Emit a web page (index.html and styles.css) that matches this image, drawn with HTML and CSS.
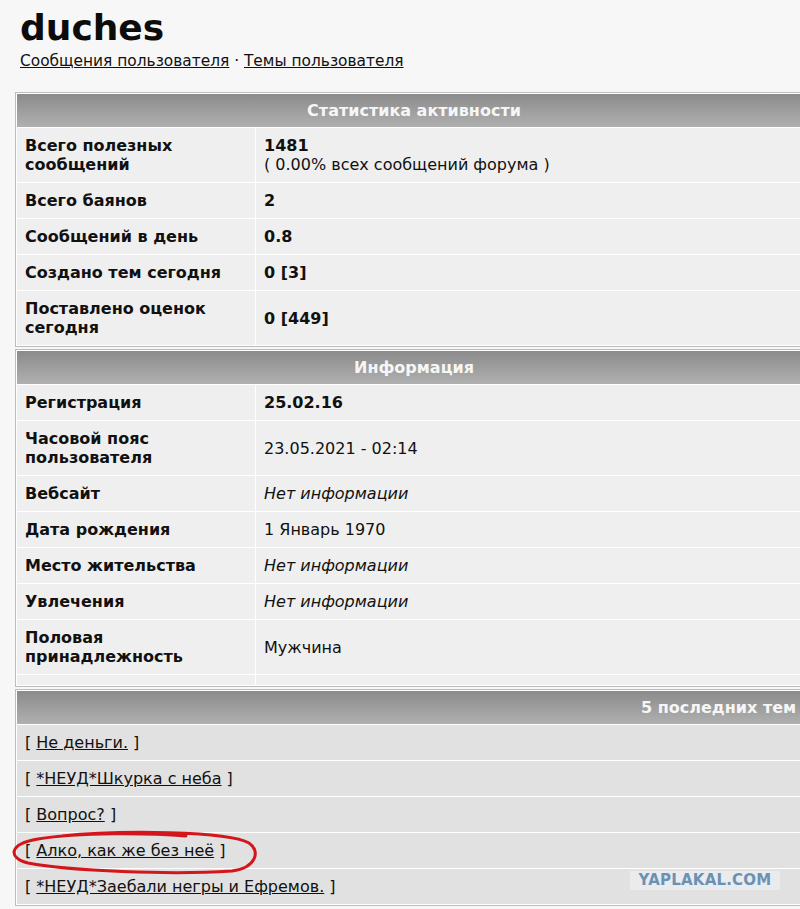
FILE: index.html
```html
<!DOCTYPE html>
<html lang="ru">
<head>
    <meta charset="UTF-8">
    <meta name="viewport" content="width=device-width, initial-scale=1.0">
    <title>duches</title>
    <link rel="stylesheet" href="styles.css">
</head>
<body>

<div class="page">
    <h1 class="user-name">duches</h1>
    <div class="user-links">
        <a href="#">Сообщения пользователя</a> · <a href="#">Темы пользователя</a>
    </div>

    <!-- Activity stats -->
    <table class="profile-table">
        <tr><th colspan="2">Статистика активности</th></tr>
        <tr>
            <td class="label">Всего полезных сообщений</td>
            <td><b>1481</b><br>( 0.00% всех сообщений форума )</td>
        </tr>
        <tr>
            <td class="label">Всего баянов</td>
            <td><b>2</b></td>
        </tr>
        <tr>
            <td class="label">Сообщений в день</td>
            <td><b>0.8</b></td>
        </tr>
        <tr>
            <td class="label">Создано тем сегодня</td>
            <td><b>0 [3]</b></td>
        </tr>
        <tr>
            <td class="label">Поставлено оценок сегодня</td>
            <td><b>0 [449]</b></td>
        </tr>
    </table>

    <!-- Profile info -->
    <table class="profile-table">
        <tr><th colspan="2">Информация</th></tr>
        <tr>
            <td class="label">Регистрация</td>
            <td><b>25.02.16</b></td>
        </tr>
        <tr>
            <td class="label">Часовой пояс пользователя</td>
            <td>23.05.2021 - 02:14</td>
        </tr>
        <tr>
            <td class="label">Вебсайт</td>
            <td class="no-info">Нет информации</td>
        </tr>
        <tr>
            <td class="label">Дата рождения</td>
            <td>1 Январь 1970</td>
        </tr>
        <tr>
            <td class="label">Место жительства</td>
            <td class="no-info">Нет информации</td>
        </tr>
        <tr>
            <td class="label">Увлечения</td>
            <td class="no-info">Нет информации</td>
        </tr>
        <tr>
            <td class="label">Половая принадлежность</td>
            <td>Мужчина</td>
        </tr>
        <tr class="spacer-row"><td></td><td></td></tr>
    </table>

    <!-- Last topics -->
    <table class="profile-table topics-table">
        <tr><th>5 последних тем пользователя</th></tr>
        <tr><td>[ <a href="#">Не деньги.</a> ]</td></tr>
        <tr><td>[ <a href="#">*НЕУД*Шкурка с неба</a> ]</td></tr>
        <tr><td>[ <a href="#">Вопрос?</a> ]</td></tr>
        <tr><td>[ <a href="#">Алко, как же без неё</a> ]</td></tr>
        <tr><td>[ <a href="#">*НЕУД*Заебали негры и Ефремов.</a> ]</td></tr>
    </table>
</div>

<!-- marker loop around one topic -->
<svg class="marker" width="800" height="909" viewBox="0 0 800 909">
    <path d="M 62 836 C 120 830, 228 831, 249 843 C 261 851, 256 868, 232 871 C 170 875, 70 871, 28 863 C 8 858, 8 844, 38 839 C 80 832, 150 833, 186 836"
          fill="none" stroke="#d3161c" stroke-width="3" stroke-linecap="round"/>
</svg>

<div class="watermark">YAPLAKAL.COM</div>

</body>
</html>
```

FILE: styles.css
```css
body {
    margin: 0;
    background-color: #f7f7f7;
    font-family: "DejaVu Sans", Verdana, sans-serif;
    font-size: 16px;
    color: #111;
    overflow: hidden;
    position: relative;
}

.page {
    padding: 6px 0 0 15px;
}

.user-name {
    font-size: 36px;
    font-weight: bold;
    line-height: 44px;
    margin: 0 0 0 5px;
    color: #0c0c0c;
}

.user-links {
    margin: 0 0 20px 5px;
    line-height: 22px;
    font-size: 15.4px;
}

.user-links a,
.topics-table a {
    color: #111;
    text-decoration: underline;
}

.profile-table {
    width: 798px;
    border: 1px solid #bcbcbc;
    border-spacing: 1px;
    background-color: #fff;
    margin-bottom: 2px;
}

.profile-table th {
    background: linear-gradient(#8b8b8b, #b0b0b0);
    color: #f6f6f6;
    font-weight: bold;
    padding: 7px 8px;
    line-height: 19px;
    text-align: center;
}

.profile-table td {
    background-color: #efefef;
    padding: 8px;
    line-height: 19px;
    vertical-align: middle;
}

.profile-table td.label {
    width: 222px;
    font-weight: bold;
}

.profile-table td.no-info {
    font-style: italic;
}

.spacer-row td {
    padding: 0;
    height: 10px;
}

.topics-table {
    width: 1540px;
}

.topics-table td {
    background-color: #e1e1e1;
}

.marker {
    position: absolute;
    left: 0;
    top: 0;
    pointer-events: none;
}

/* Site watermark in the corner */
.watermark {
    position: absolute;
    left: 630px;
    top: 871px;
    width: 150px;
    height: 19px;
    background-color: #eaebec;
    color: #6b92b4;
    font-weight: bold;
    font-size: 15px;
    line-height: 19px;
    text-align: center;
    letter-spacing: 0.2px;
}
```
